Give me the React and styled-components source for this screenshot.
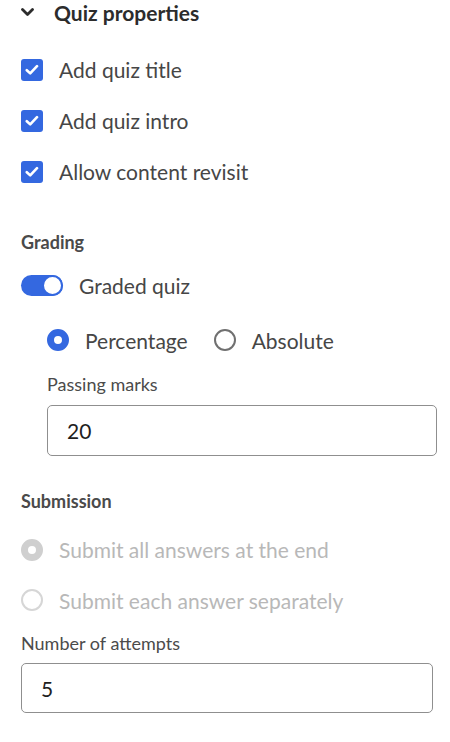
import React from 'react'
import styled, { createGlobalStyle } from 'styled-components'

const GlobalStyle = createGlobalStyle`
  body {
    margin: 0;
    background: #fff;
    font-family: Lato, "Liberation Sans", sans-serif;
  }
`

const BLUE = '#3468e0'

const Panel = styled.div`
  width: 450px;
  padding: 0 0 0 21px;
  box-sizing: border-box;
  color: #464646;
`

const Header = styled.div`
  display: flex;
  align-items: center;
  gap: 20px;
  height: 24px;
  font-size: 21px;
  font-weight: 700;
  color: #2c2c2c;
`

const List = styled.div`
  display: flex;
  flex-direction: column;
  margin-top: ${({ $top }) => $top}px;
`

const Row = styled.label`
  display: flex;
  align-items: center;
  gap: 16px;
  height: ${({ $h }) => $h || 51}px;
  font-size: 21px;
  color: ${({ $disabled }) => ($disabled ? '#b8b8b8' : '#464646')};
`

const Box = styled.span`
  width: 22px;
  height: 22px;
  border-radius: 3px;
  background: ${BLUE};
  display: flex;
  align-items: center;
  justify-content: center;
  flex-shrink: 0;
`

const Radio = styled.span`
  width: 22px;
  height: 22px;
  box-sizing: border-box;
  border-radius: 50%;
  background: #fff;
  flex-shrink: 0;
  border: ${({ $on }) => ($on ? 7 : 2)}px solid
    ${({ $on, $disabled }) =>
      $disabled ? ($on ? '#cfcfcf' : '#d6d6d6') : $on ? BLUE : '#707070'};
`

const Track = styled.span`
  width: 42px;
  height: 21px;
  border-radius: 11px;
  background: ${BLUE};
  display: flex;
  justify-content: flex-end;
  flex-shrink: 0;
`

const Knob = styled.span`
  width: 21px;
  height: 21px;
  box-sizing: border-box;
  border-radius: 50%;
  border: 2px solid ${BLUE};
  background: #fff;
`

const SectionLabel = styled.div`
  font-size: 18px;
  line-height: 24px;
  font-weight: 700;
  color: #4a4a4a;
  margin-top: ${({ $top }) => $top}px;
`

const Indent = styled.div`
  padding-left: 26px;
`

const RadioGroup = styled.div`
  display: flex;
  align-items: center;
  gap: 26px;
  height: 40px;
  margin-top: 14px;
`

const FieldLabel = styled.div`
  font-size: 18px;
  line-height: 24px;
  color: #4b4b4b;
  margin-top: ${({ $top }) => $top}px;
`

const Input = styled.div`
  width: ${({ $w }) => $w}px;
  height: ${({ $h }) => $h}px;
  box-sizing: border-box;
  margin-top: ${({ $top }) => $top}px;
  border: 1px solid #8f8f8f;
  border-radius: 5px;
  display: flex;
  align-items: center;
  padding-left: 19px;
  font-size: 21px;
  color: #1f1f1f;
`

const Check = () => (
  <svg width="14" height="12" viewBox="0 0 14 12">
    <polyline
      points="1.8,6.2 5.2,9.4 12,2.2"
      fill="none"
      stroke="#fff"
      strokeWidth="2.6"
      strokeLinecap="round"
      strokeLinejoin="round"
    />
  </svg>
)

const Chevron = () => (
  <svg width="13" height="9" viewBox="0 0 13 9">
    <polyline
      points="1.5,1.5 6.5,6.5 11.5,1.5"
      fill="none"
      stroke="#2c2c2c"
      strokeWidth="2.8"
      strokeLinecap="round"
      strokeLinejoin="round"
    />
  </svg>
)

const checks = ['Add quiz title', 'Add quiz intro', 'Allow content revisit']

export default function App() {
  return (
    <>
      <GlobalStyle />
      <Panel>
        <Header>
          <Chevron />
          Quiz properties
        </Header>

        <List $top={20}>
          {checks.map((c) => (
            <Row key={c}>
              <Box>
                <Check />
              </Box>
              {c}
            </Row>
          ))}
        </List>

        <SectionLabel $top={33}>Grading</SectionLabel>
        <List $top={11}>
          <Row $h={41}>
            <Track>
              <Knob />
            </Track>
            Graded quiz
          </Row>
        </List>

        <Indent>
          <RadioGroup>
            <Row $h={40}>
              <Radio $on />
              Percentage
            </Row>
            <Row $h={40}>
              <Radio />
              Absolute
            </Row>
          </RadioGroup>
          <FieldLabel $top={12}>Passing marks</FieldLabel>
          <Input $w={390} $h={51} $top={9}>
            20
          </Input>
        </Indent>

        <SectionLabel $top={33}>Submission</SectionLabel>
        <List $top={11}>
          <Row $disabled>
            <Radio $on $disabled />
            Submit all answers at the end
          </Row>
          <Row $disabled $h={50}>
            <Radio $disabled />
            Submit each answer separately
          </Row>
        </List>
        <FieldLabel $top={6}>Number of attempts</FieldLabel>
        <Input $w={412} $h={50} $top={8}>
          5
        </Input>
      </Panel>
    </>
  )
}
